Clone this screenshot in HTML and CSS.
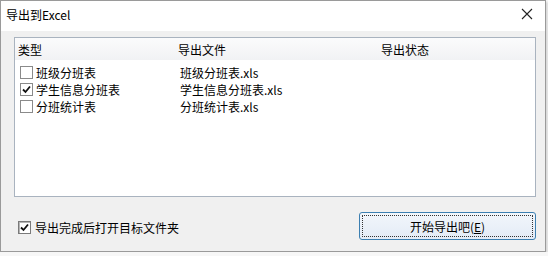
FILE: index.html
```html
<!DOCTYPE html>
<html lang="zh-CN">
<head>
  <meta charset="UTF-8">
  <title>导出到Excel</title>
  <link rel="stylesheet" href="styles.css">
</head>
<body>
  <div class="window">
    <div class="titlebar">
      <span class="title">导出到Excel</span>
      <svg class="close" width="12" height="12" viewBox="0 0 12 12">
        <path d="M1 1 L11 11 M11 1 L1 11" stroke="#222" stroke-width="1.1" fill="none"/>
      </svg>
    </div>

    <div class="content">
      <!-- list of tables -->
      <div class="listbox">
        <div class="list-head">
          <span class="col-type">类型</span>
          <span class="col-file">导出文件</span>
          <span class="col-state">导出状态</span>
        </div>
        <div class="row">
          <span class="col-type"><span class="chk"></span>班级分班表</span>
          <span class="col-file">班级分班表.xls</span>
        </div>
        <div class="row">
          <span class="col-type"><span class="chk on"><svg width="9" height="9" viewBox="0 0 9 9"><path d="M1 4.5 L3.5 7 L8 1.5" stroke="#111" stroke-width="1.8" fill="none"/></svg></span>学生信息分班表</span>
          <span class="col-file">学生信息分班表.xls</span>
        </div>
        <div class="row">
          <span class="col-type"><span class="chk"></span>分班统计表</span>
          <span class="col-file">分班统计表.xls</span>
        </div>
      </div>

      <div class="footer">
        <label class="open-folder"><span class="chk classic"><svg width="9" height="9" viewBox="0 0 9 9"><path d="M1 4.5 L3.5 7 L8 1.5" stroke="#111" stroke-width="1.8" fill="none"/></svg></span>导出完成后打开目标文件夹</label>
        <button class="start"><span class="focus">开始导出吧(<u>E</u>)</span></button>
      </div>
    </div>
  </div>
</body>
</html>
```

FILE: styles.css
```css
body { margin: 0; background: #f7f7f7; font-family: "Noto Sans CJK SC", "Microsoft YaHei", sans-serif; font-size: 12px; color: #000; }
.window { width: 544px; height: 250px; border: 1px solid #9a9a9a; background: #f0f0f0; display: flex; flex-direction: column; box-shadow: 2px 2px 2px #d8d8d8; }
.titlebar { height: 30px; background: #fff; display: flex; align-items: center; justify-content: space-between; padding: 0 12px 0 5px; }
.title { line-height: 16px; margin-top: -3px; }
.close { margin-top: -4px; }
.content { padding: 6px 9px 0 13px; display: flex; flex-direction: column; }
.listbox { height: 158px; border: 1px solid #a9b3bf; background: #fff; }
.list-head { display: flex; height: 22px; align-items: center; background: linear-gradient(#fbfbfc, #f1f2f4); padding-top: 1px; box-sizing: border-box; }
.col-type { width: 160px; padding-left: 3px; display: flex; align-items: center; box-sizing: border-box; }
.col-file { width: 200px; padding-left: 5px; box-sizing: border-box; }
.list-head .col-file { padding-left: 3px; }
.list-head .col-state { padding-left: 6px; }
.row { display: flex; height: 17px; align-items: center; }
.list-head + .row { margin-top: 4px; }
.row .col-type { padding-left: 4px; }
.chk { width: 11px; height: 11px; border: 1px solid #8a8a8a; background: #fff; margin: 0 3px 0 1px; display: inline-flex; align-items: center; justify-content: center; }
.footer { display: flex; justify-content: space-between; align-items: center; margin-top: 15px; }
.open-folder { display: flex; align-items: center; padding-left: 3px; margin-top: 2px; }
.chk.classic { border-color: #7a7a7a; background: #fff; box-shadow: inset 1px 1px 0 #b5b5b5; margin-right: 4px; }
.start { width: 177px; height: 28px; border: 1px solid #3c7fb1; border-radius: 3px; background: linear-gradient(#f2f6fb, #e3ebf6); padding: 2px; font: inherit; color: #000; display: flex; }
.focus { flex: 1; border: 1px dotted #333; display: flex; align-items: center; justify-content: center; border-radius: 1px; }
.focus u { text-decoration: underline; }
```
